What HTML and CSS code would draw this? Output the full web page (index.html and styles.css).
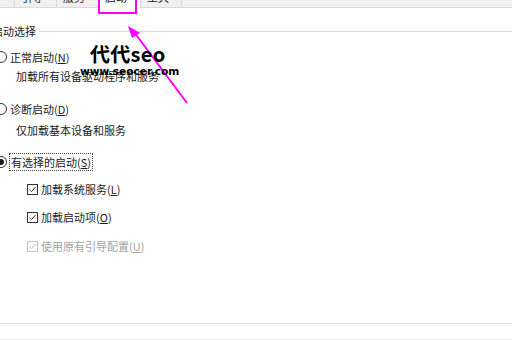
FILE: index.html
```html
<!doctype html>
<html lang="zh-CN">
<head>
  <meta charset="utf-8">
  <title>系统配置</title>
  <link rel="stylesheet" href="styles.css">
</head>
<body>
  <div class="page">
    <div class="tabs">
      <div class="tab">引导</div>
      <div class="tab">服务</div>
      <div class="tab active">启动</div>
      <div class="tab">工具</div>
    </div>

    <div class="panel">
      <div class="legend"><span class="legend-text">启动选择</span><span class="legend-line"></span></div>

      <div class="row r1"><span class="radio"></span><span>正常启动(<u>N</u>)</span></div>
      <div class="desc d1">加载所有设备驱动程序和服务</div>

      <div class="row r2"><span class="radio"></span><span>诊断启动(<u>D</u>)</span></div>
      <div class="desc d2">仅加载基本设备和服务</div>

      <div class="row r3"><span class="radio on"></span><span class="focus">有选择的启动(<u>S</u>)</span></div>

      <div class="check c1"><span class="box"><svg viewBox="0 0 11 11"><path d="M1.8 5.6 L4.3 8.1 L9.2 2.4" fill="none" stroke="#333" stroke-width="1.2"/></svg></span><span>加载系统服务(<u>L</u>)</span></div>
      <div class="check c2"><span class="box"><svg viewBox="0 0 11 11"><path d="M1.8 5.6 L4.3 8.1 L9.2 2.4" fill="none" stroke="#333" stroke-width="1.2"/></svg></span><span>加载启动项(<u>O</u>)</span></div>
      <div class="check c3 disabled"><span class="box"><svg viewBox="0 0 11 11"><path d="M1.8 5.6 L4.3 8.1 L9.2 2.4" fill="none" stroke="#bcbcbc" stroke-width="1.2"/></svg></span><span>使用原有引导配置(<u>U</u>)</span></div>
    </div>

    <div class="footer"></div>

    <!-- annotation drawn on top of the screenshot -->
    <div class="mark-box"></div>
    <svg class="arrow" width="512" height="340" viewBox="0 0 512 340">
      <line x1="187" y1="103" x2="134" y2="32" stroke="#ff00ff" stroke-width="2"/>
      <polygon points="128,26 140,33 132,38" fill="#ff00ff"/>
    </svg>
    <div class="watermark">
      <div class="wm-title">代代seo</div>
      <div class="wm-url">www.seocer.com</div>
    </div>
  </div>
</body>
</html>
```

FILE: styles.css
```css
*{box-sizing:border-box}
html,body{margin:0;background:#fff}
body{font-family:"Noto Sans CJK SC","Noto Sans",sans-serif;font-size:11px;color:#1b1b1b}
u{text-decoration:underline;text-underline-offset:1px}

.page{position:relative;width:512px;height:340px;overflow:hidden;display:flex;flex-direction:column}

/* tab strip, mostly scrolled out of view */
.tabs{height:8px;flex:none;display:flex;padding-left:14px;background:#f0f0f0;border-bottom:1px solid #dadada}
.tab{width:42px;height:8px;padding-left:6px;border-left:1px solid #d9d9d9;overflow:hidden;line-height:12px}
.tab:last-child{border-right:1px solid #d9d9d9}
.tab::before{content:"";display:block;margin-top:-9px}
.tab.active{background:#fff;height:9px;margin-bottom:-1px}

.panel{flex:1;display:flex;flex-direction:column}

.legend{display:flex;align-items:center;height:16px;margin-top:15px;margin-left:-8px;line-height:16px}
.legend-text{padding-right:3px}
.legend-line{flex:1;height:1px;background:#dcdcdc}

.row,.desc,.check{display:flex;align-items:center;height:18px;line-height:18px}
.row{gap:3px}
.r1{margin-top:9px}
.d1{margin-top:1px}
.r2{margin-top:15px}
.d2{margin-top:3px}
.r3{margin-top:14px}
.desc{padding-left:16px}

.radio{width:12px;height:12px;margin-left:-5px;border:1px solid #333;border-radius:50%;background:#fff;display:flex;align-items:center;justify-content:center}
.radio.on::after{content:"";width:6px;height:6px;border-radius:50%;background:#1b1b1b}

.focus{border:1px dotted #444;line-height:16px;height:18px;padding:0 1px;margin-left:-1px}

.check{padding-left:27px;gap:3px}
.c1{margin-top:9px}
.c2{margin-top:10px}
.c3{margin-top:11px}
.box{width:11px;height:11px;border:1px solid #333;background:#fff;display:flex}
.box svg{width:9px;height:9px}
.disabled{color:#a3a3a3}
.disabled .box{border-color:#c4c4c4}

.footer{flex:none;height:17px;border-top:1px solid #e3e3e3;border-bottom:1px solid #f0f0f0}

/* annotation */
.mark-box{position:absolute;left:98px;top:-4px;width:39px;height:18px;border:2px solid #ff00ff}
.arrow{position:absolute;left:0;top:0;pointer-events:none}
.watermark{position:absolute;left:80px;top:42px;color:#000;font-weight:bold}
.wm-title{font-family:"Noto Sans CJK SC","DejaVu Sans",sans-serif;font-size:20px;line-height:24px;padding-left:10px;letter-spacing:0.3px}
.wm-url{font-family:"DejaVu Sans",sans-serif;font-size:10.6px;line-height:12px;margin-top:-1px}
```
